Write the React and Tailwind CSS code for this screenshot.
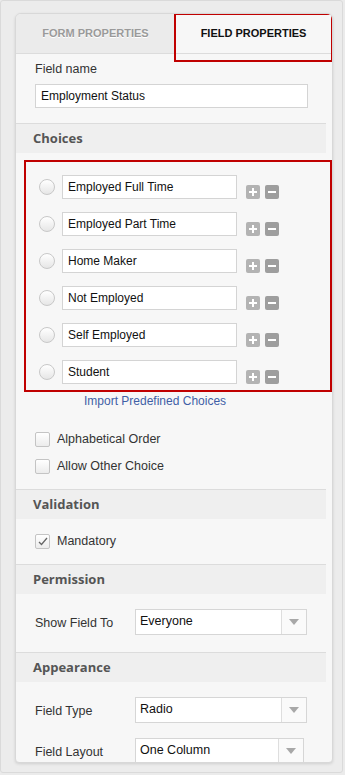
import React from 'react';

const choices = ['Employed Full Time', 'Employed Part Time', 'Home Maker', 'Not Employed', 'Self Employed', 'Student'];

function SectionHeader({ title }) {
  return (
    <div className="mr-[6px] flex h-[30px] items-center border-t border-[#dcdcdc] bg-[#efefef] pl-[17px]">
      <span className="font-['Open_Sans',sans-serif] text-[13px] font-bold text-[#555]">{title}</span>
    </div>
  );
}

function Select({ value, narrow }) {
  return (
    <div className={`flex h-[26px] border border-[#d6d6d6] bg-white ${narrow ? 'w-[169px]' : 'w-[172px]'}`}>
      <div className="flex-1 pl-[4px] pt-[4px] text-[12.5px] leading-[15px] text-[#111]">{value}</div>
      <div className="flex w-[25px] items-center justify-center border-l border-[#dedede] bg-[#fafafa]">
        <svg width="10" height="6" viewBox="0 0 10 6"><path d="M0 0h10L5 6z" fill="#a8a8a8" /></svg>
      </div>
    </div>
  );
}

function Checkbox({ label, checked }) {
  return (
    <div className="flex h-[15px] items-center gap-[7px]">
      <div className="flex h-[15px] w-[15px] items-center justify-center rounded-[2px] border border-[#c4c4c4] bg-gradient-to-b from-white to-[#ececec]">
        {checked && (
          <svg width="10" height="9" viewBox="0 0 10 9"><path d="M1 5l2.5 2.5L9 1" stroke="#666" strokeWidth="1.3" fill="none" /></svg>
        )}
      </div>
      <span className="text-[12.5px] leading-[15px] text-[#333]">{label}</span>
    </div>
  );
}

export default function App() {
  return (
    <div className="h-[775px] w-[345px] overflow-hidden bg-[#ebebeb] font-['Liberation_Sans',Arial,sans-serif]">
      <div className="h-[773px] w-[343px] rounded-[3px] border border-[#dadada] bg-[#ececec] pt-[12px] pl-[14px]">
        <div className="h-[750px] w-[318px] overflow-hidden rounded-t-[6px] rounded-b-[4px] border border-[#d8d8d8] bg-[#f7f7f7] shadow-[0_1px_3px_rgba(0,0,0,0.12)]">
          {/* Tabs */}
          <div className="flex h-[40px] border-b border-[#dcdcdc]">
            <div className="flex w-[159px] items-center justify-center bg-[#ebebeb] text-[11px] font-bold text-[#9a9a9a] [text-shadow:0_1px_0_#fff]">
              FORM PROPERTIES
            </div>
            <div className="relative flex flex-1 items-center justify-center bg-[#f7f7f7] text-[11px] font-bold text-[#111]">
              FIELD PROPERTIES
              <div className="absolute -left-px -top-px -right-px -bottom-[9px] border-2 border-[#c00000]" />
            </div>
          </div>

          <div className="px-[19px] pt-[8px] pb-[15px]">
            <div className="text-[12.5px] leading-[15px] text-[#333]">Field name</div>
            <div className="mt-[7px] h-[24px] w-[273px] border border-[#d4d4d4] bg-white pl-[5px] pt-[4px] text-[12px] leading-[15px] text-[#111]">
              Employment Status
            </div>
          </div>

          <SectionHeader title="Choices" />

          <div className="ml-[8px] mt-[7px] w-[308px] border-2 border-[#c00000] px-[13px] pt-[13px] pb-[6px]">
            <div className="flex flex-col gap-[13px]">
              {choices.map((c) => (
                <div key={c} className="flex items-start">
                  <div className="mt-[4px] h-[16px] w-[16px] rounded-full border border-[#c8c8c8] bg-gradient-to-b from-white to-[#e6e6e6]" />
                  <div className="ml-[7px] h-[24px] w-[175px] border border-[#d4d4d4] bg-white pl-[5px] pt-[4px] text-[12px] leading-[15px] text-[#111]">
                    {c}
                  </div>
                  <div className="ml-[9px] mt-[10px] flex gap-[5px]">
                    <div className="flex h-[14px] w-[14px] items-center justify-center rounded-[2px] bg-[#b3b3b3]">
                      <svg width="8" height="8" viewBox="0 0 8 8"><path d="M4 0v8M0 4h8" stroke="#fff" strokeWidth="2" /></svg>
                    </div>
                    <div className="flex h-[14px] w-[14px] items-center justify-center rounded-[2px] bg-[#9e9e9e]">
                      <svg width="8" height="8" viewBox="0 0 8 8"><path d="M0 4h8" stroke="#fff" strokeWidth="2" /></svg>
                    </div>
                  </div>
                </div>
              ))}
            </div>
          </div>

          <div className="h-[18px] pl-[68px] text-[12px] leading-[18px] text-[#3f5fa6]">Import Predefined Choices</div>

          <div className="flex flex-col gap-[12px] px-[19px] pt-[22px] pb-[15px]">
            <Checkbox label="Alphabetical Order" />
            <Checkbox label="Allow Other Choice" />
          </div>

          <SectionHeader title="Validation" />
          <div className="px-[19px] pt-[15px] pb-[15px]">
            <Checkbox label="Mandatory" checked />
          </div>

          <SectionHeader title="Permission" />
          <div className="flex items-center px-[19px] pt-[15px] pb-[17px]">
            <span className="w-[100px] pt-[2px] text-[12.5px] leading-[15px] text-[#333]">Show Field To</span>
            <Select value="Everyone" />
          </div>

          <SectionHeader title="Appearance" />
          <div className="flex flex-col gap-[15px] px-[19px] pt-[15px]">
            <div className="flex items-center">
              <span className="w-[100px] pt-[3px] text-[12.5px] leading-[15px] text-[#333]">Field Type</span>
              <Select value="Radio" />
            </div>
            <div className="flex items-center">
              <span className="w-[100px] pt-[3px] text-[12.5px] leading-[15px] text-[#333]">Field Layout</span>
              <Select value="One Column" narrow />
            </div>
          </div>
        </div>
      </div>
    </div>
  );
}
